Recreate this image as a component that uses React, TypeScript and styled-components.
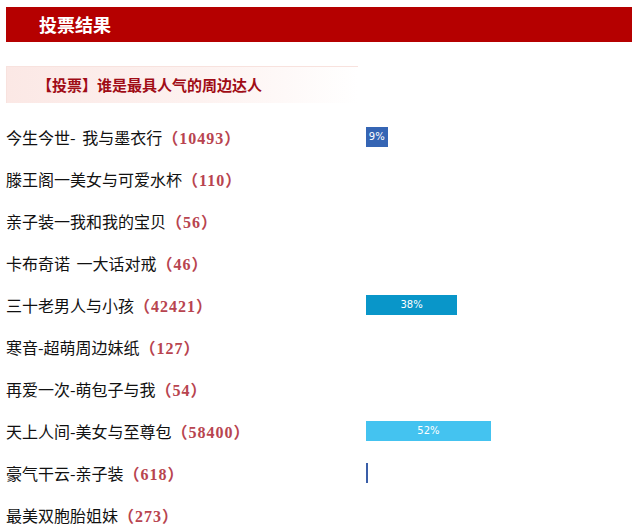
import React from "react";
import styled, { createGlobalStyle } from "styled-components";

type Option = { name: string; votes: number; color: string };

const options: Option[] = [
  { name: "今生今世- 我与墨衣行", votes: 10493, color: "#3565b4" },
  { name: "滕王阁一美女与可爱水杯", votes: 110, color: "#2f8fc4" },
  { name: "亲子装一我和我的宝贝", votes: 56, color: "#3fb8e8" },
  { name: "卡布奇诺 一大话对戒", votes: 46, color: "#3565b4" },
  { name: "三十老男人与小孩", votes: 42421, color: "#0996c9" },
  { name: "寒音-超萌周边妹纸", votes: 127, color: "#3fb8e8" },
  { name: "再爱一次-萌包子与我", votes: 54, color: "#3565b4" },
  { name: "天上人间-美女与至尊包", votes: 58400, color: "#44c3f0" },
  { name: "豪气干云-亲子装", votes: 618, color: "#3a5ea8" },
  { name: "最美双胞胎姐妹", votes: 273, color: "#0996c9" },
];

const total = options.reduce((s, o) => s + o.votes, 0);
const TRACK = 240;

const App = () => {
  return (
    <>
      <GlobalStyle />
      <Page>
        <Header>投票结果</Header>
        <Subject>【投票】谁是最具人气的周边达人</Subject>
        <List>
          {options.map((item, index) => {
            const pct = Math.round((item.votes / total) * 100);
            const width = (pct / 100) * TRACK;
            return (
              <Row key={index}>
                <Name>
                  {item.name}
                  <Count>（{item.votes}）</Count>
                </Name>
                <Track>
                  {pct > 0 && (
                    <Bar $color={item.color} style={{ width }}>
                      {width >= 16 ? `${pct}%` : ""}
                    </Bar>
                  )}
                </Track>
              </Row>
            );
          })}
        </List>
      </Page>
    </>
  );
};

const GlobalStyle = createGlobalStyle`
  body {
    margin: 0;
    background: #fff;
    font-family: "Noto Sans CJK SC", "DejaVu Sans", sans-serif;
  }
`;

const Page = styled.div`
  padding: 7px 5px 0 6px;
`;

const Header = styled.div`
  height: 35px;
  background-color: #b50000;
  color: #fff;
  font-size: 18px;
  font-weight: bold;
  line-height: 35px;
  padding-left: 33px;
`;

const Subject = styled.div`
  margin-top: 24px;
  width: 352px;
  height: 37px;
  box-sizing: border-box;
  border-top: 1px solid #f8e2de;
  border-left: 1px solid #f8e2de;
  background: linear-gradient(to right, #fbe8e5 0%, #fdf2f0 55%, #fff 100%);
  color: #a00c16;
  font-size: 15px;
  font-weight: bold;
  line-height: 35px;
  padding-left: 30px;
`;

const List = styled.div`
  margin-top: 13px;
`;

const Row = styled.div`
  display: flex;
  align-items: center;
  height: 42px;
`;

const Name = styled.div`
  width: 360px;
  font-size: 16px;
  color: #111;
  white-space: nowrap;
  word-spacing: 3px;
`;

const Count = styled.span`
  font-family: "Liberation Serif", "Noto Sans CJK SC", serif;
  font-weight: bold;
  color: #b8444f;
  letter-spacing: 1px;
`;

const Track = styled.div`
  width: ${TRACK}px;
  height: 20px;
`;

const Bar = styled.div<{ $color: string }>`
  height: 20px;
  background-color: ${(p) => p.$color};
  color: #fff;
  font-family: "DejaVu Sans", sans-serif;
  font-size: 10px;
  line-height: 20px;
  text-align: center;
  overflow: hidden;
  white-space: nowrap;
`;

export default App;
